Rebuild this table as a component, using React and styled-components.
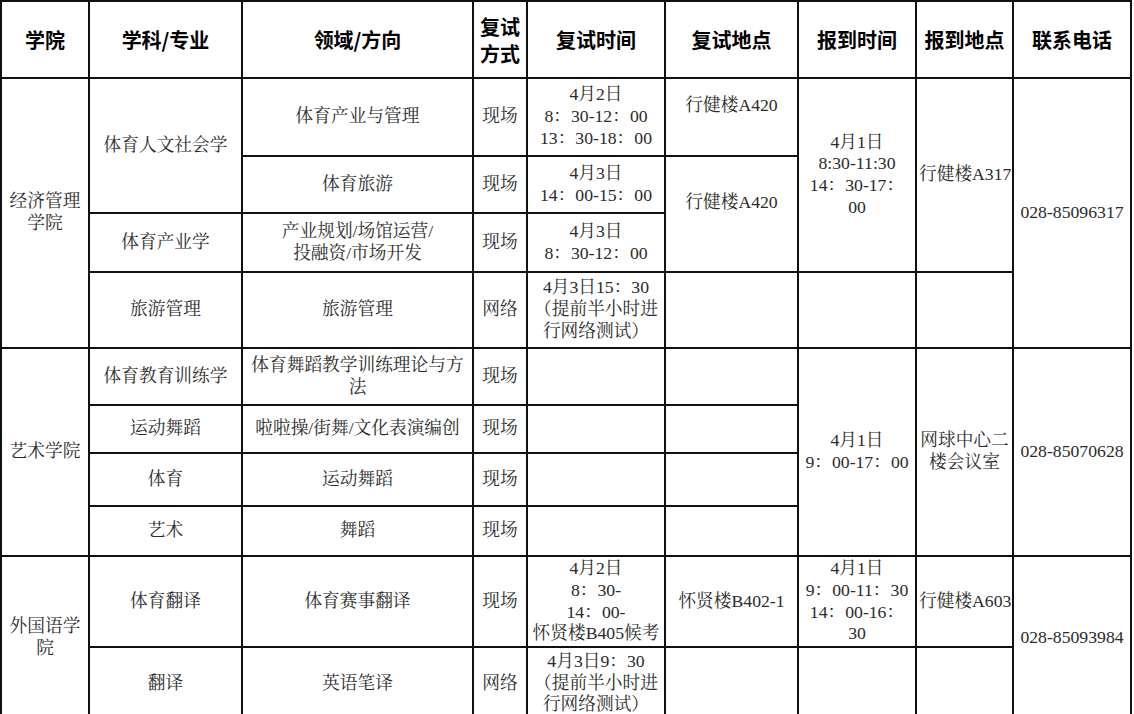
import React from "react";
import styled, { createGlobalStyle } from "styled-components";

const GlobalStyle = createGlobalStyle`
  html, body {
    margin: 0;
    padding: 0;
    background: #fff;
  }
  body {
    font-family: "Liberation Serif", "Noto Serif CJK SC", "Noto Sans CJK SC", serif;
  }
`;

const Page = styled.div`
  width: 1134px;
  height: 714px;
  overflow: hidden;
  background: #fff;
`;

const Table = styled.table`
  border-collapse: collapse;
  table-layout: fixed;
  width: 1131px;
  color: #2b2b2b;
  font-size: 17.7px;
  line-height: 21.7px;
`;

const Row = styled.tr`
  height: ${(props) => props.$h}px;
`;

const HeadCell = styled.th`
  border: 2px solid #111;
  padding: 0 2px;
  font-family: "Noto Sans CJK SC", "Liberation Sans", sans-serif;
  font-weight: 700;
  font-size: 20px;
  line-height: ${(props) => (props.$stack ? "27px" : "25px")};
  color: #000;
  text-align: center;
  vertical-align: middle;
`;

const Cell = styled.td`
  border: 2px solid #111;
  padding: 0 2px ${(props) => (props.$lift ? "22px" : "0")};
  text-align: center;
  vertical-align: middle;
  white-space: nowrap;
`;

const widths = [88, 153, 231, 54, 138, 133, 118, 97, 118];

const App = () => {
  return (
    <Page>
      <GlobalStyle />
      <Table>
        <colgroup>
          {widths.map((w, i) => (
            <col key={i} style={{ width: w }} />
          ))}
        </colgroup>
        <thead>
          <Row $h={77}>
            <HeadCell>学院</HeadCell>
            <HeadCell>学科/专业</HeadCell>
            <HeadCell>领域/方向</HeadCell>
            <HeadCell $stack>
              复试
              <br />
              方式
            </HeadCell>
            <HeadCell>复试时间</HeadCell>
            <HeadCell>复试地点</HeadCell>
            <HeadCell>报到时间</HeadCell>
            <HeadCell>报到地点</HeadCell>
            <HeadCell>联系电话</HeadCell>
          </Row>
        </thead>
        <tbody>
          {/* 经济管理学院 */}
          <Row $h={78}>
            <Cell rowSpan={4}>
              经济管理
              <br />
              学院
            </Cell>
            <Cell rowSpan={2}>体育人文社会学</Cell>
            <Cell>体育产业与管理</Cell>
            <Cell>现场</Cell>
            <Cell>
              4月2日
              <br />
              8：30-12：00
              <br />
              13：30-18：00
            </Cell>
            <Cell $lift>行健楼A420</Cell>
            <Cell rowSpan={3}>
              4月1日
              <br />
              8:30-11:30
              <br />
              14：30-17：
              <br />
              00
            </Cell>
            <Cell rowSpan={3}>行健楼A317</Cell>
            <Cell rowSpan={4}>028-85096317</Cell>
          </Row>
          <Row $h={57}>
            <Cell>体育旅游</Cell>
            <Cell>现场</Cell>
            <Cell>
              4月3日
              <br />
              14：00-15：00
            </Cell>
            <Cell rowSpan={2} $lift>
              行健楼A420
            </Cell>
          </Row>
          <Row $h={59}>
            <Cell>体育产业学</Cell>
            <Cell>
              产业规划/场馆运营/
              <br />
              投融资/市场开发
            </Cell>
            <Cell>现场</Cell>
            <Cell>
              4月3日
              <br />
              8：30-12：00
            </Cell>
          </Row>
          <Row $h={76}>
            <Cell>旅游管理</Cell>
            <Cell>旅游管理</Cell>
            <Cell>网络</Cell>
            <Cell>
              4月3日15：30
              <br />
              （提前半小时进
              <br />
              行网络测试）
            </Cell>
            <Cell />
            <Cell />
            <Cell />
          </Row>

          {/* 艺术学院 */}
          <Row $h={57}>
            <Cell rowSpan={4}>艺术学院</Cell>
            <Cell>体育教育训练学</Cell>
            <Cell>
              体育舞蹈教学训练理论与方
              <br />
              法
            </Cell>
            <Cell>现场</Cell>
            <Cell />
            <Cell />
            <Cell rowSpan={4}>
              4月1日
              <br />
              9：00-17：00
            </Cell>
            <Cell rowSpan={4}>
              网球中心二
              <br />
              楼会议室
            </Cell>
            <Cell rowSpan={4}>028-85070628</Cell>
          </Row>
          <Row $h={48}>
            <Cell>运动舞蹈</Cell>
            <Cell>啦啦操/街舞/文化表演编创</Cell>
            <Cell>现场</Cell>
            <Cell />
            <Cell />
          </Row>
          <Row $h={53}>
            <Cell>体育</Cell>
            <Cell>运动舞蹈</Cell>
            <Cell>现场</Cell>
            <Cell />
            <Cell />
          </Row>
          <Row $h={50}>
            <Cell>艺术</Cell>
            <Cell>舞蹈</Cell>
            <Cell>现场</Cell>
            <Cell />
            <Cell />
          </Row>

          {/* 外国语学院 */}
          <Row $h={91}>
            <Cell rowSpan={2}>
              外国语学
              <br />院
            </Cell>
            <Cell>体育翻译</Cell>
            <Cell>体育赛事翻译</Cell>
            <Cell>现场</Cell>
            <Cell>
              4月2日
              <br />
              8：30-
              <br />
              14：00-
              <br />
              怀贤楼B405候考
            </Cell>
            <Cell>怀贤楼B402-1</Cell>
            <Cell>
              4月1日
              <br />
              9：00-11：30
              <br />
              14：00-16：
              <br />
              30
            </Cell>
            <Cell>行健楼A603</Cell>
            <Cell rowSpan={2}>028-85093984</Cell>
          </Row>
          <Row $h={73}>
            <Cell>翻译</Cell>
            <Cell>英语笔译</Cell>
            <Cell>网络</Cell>
            <Cell>
              4月3日9：30
              <br />
              （提前半小时进
              <br />
              行网络测试）
            </Cell>
            <Cell />
            <Cell />
            <Cell />
          </Row>
        </tbody>
      </Table>
    </Page>
  );
};

export default App;
